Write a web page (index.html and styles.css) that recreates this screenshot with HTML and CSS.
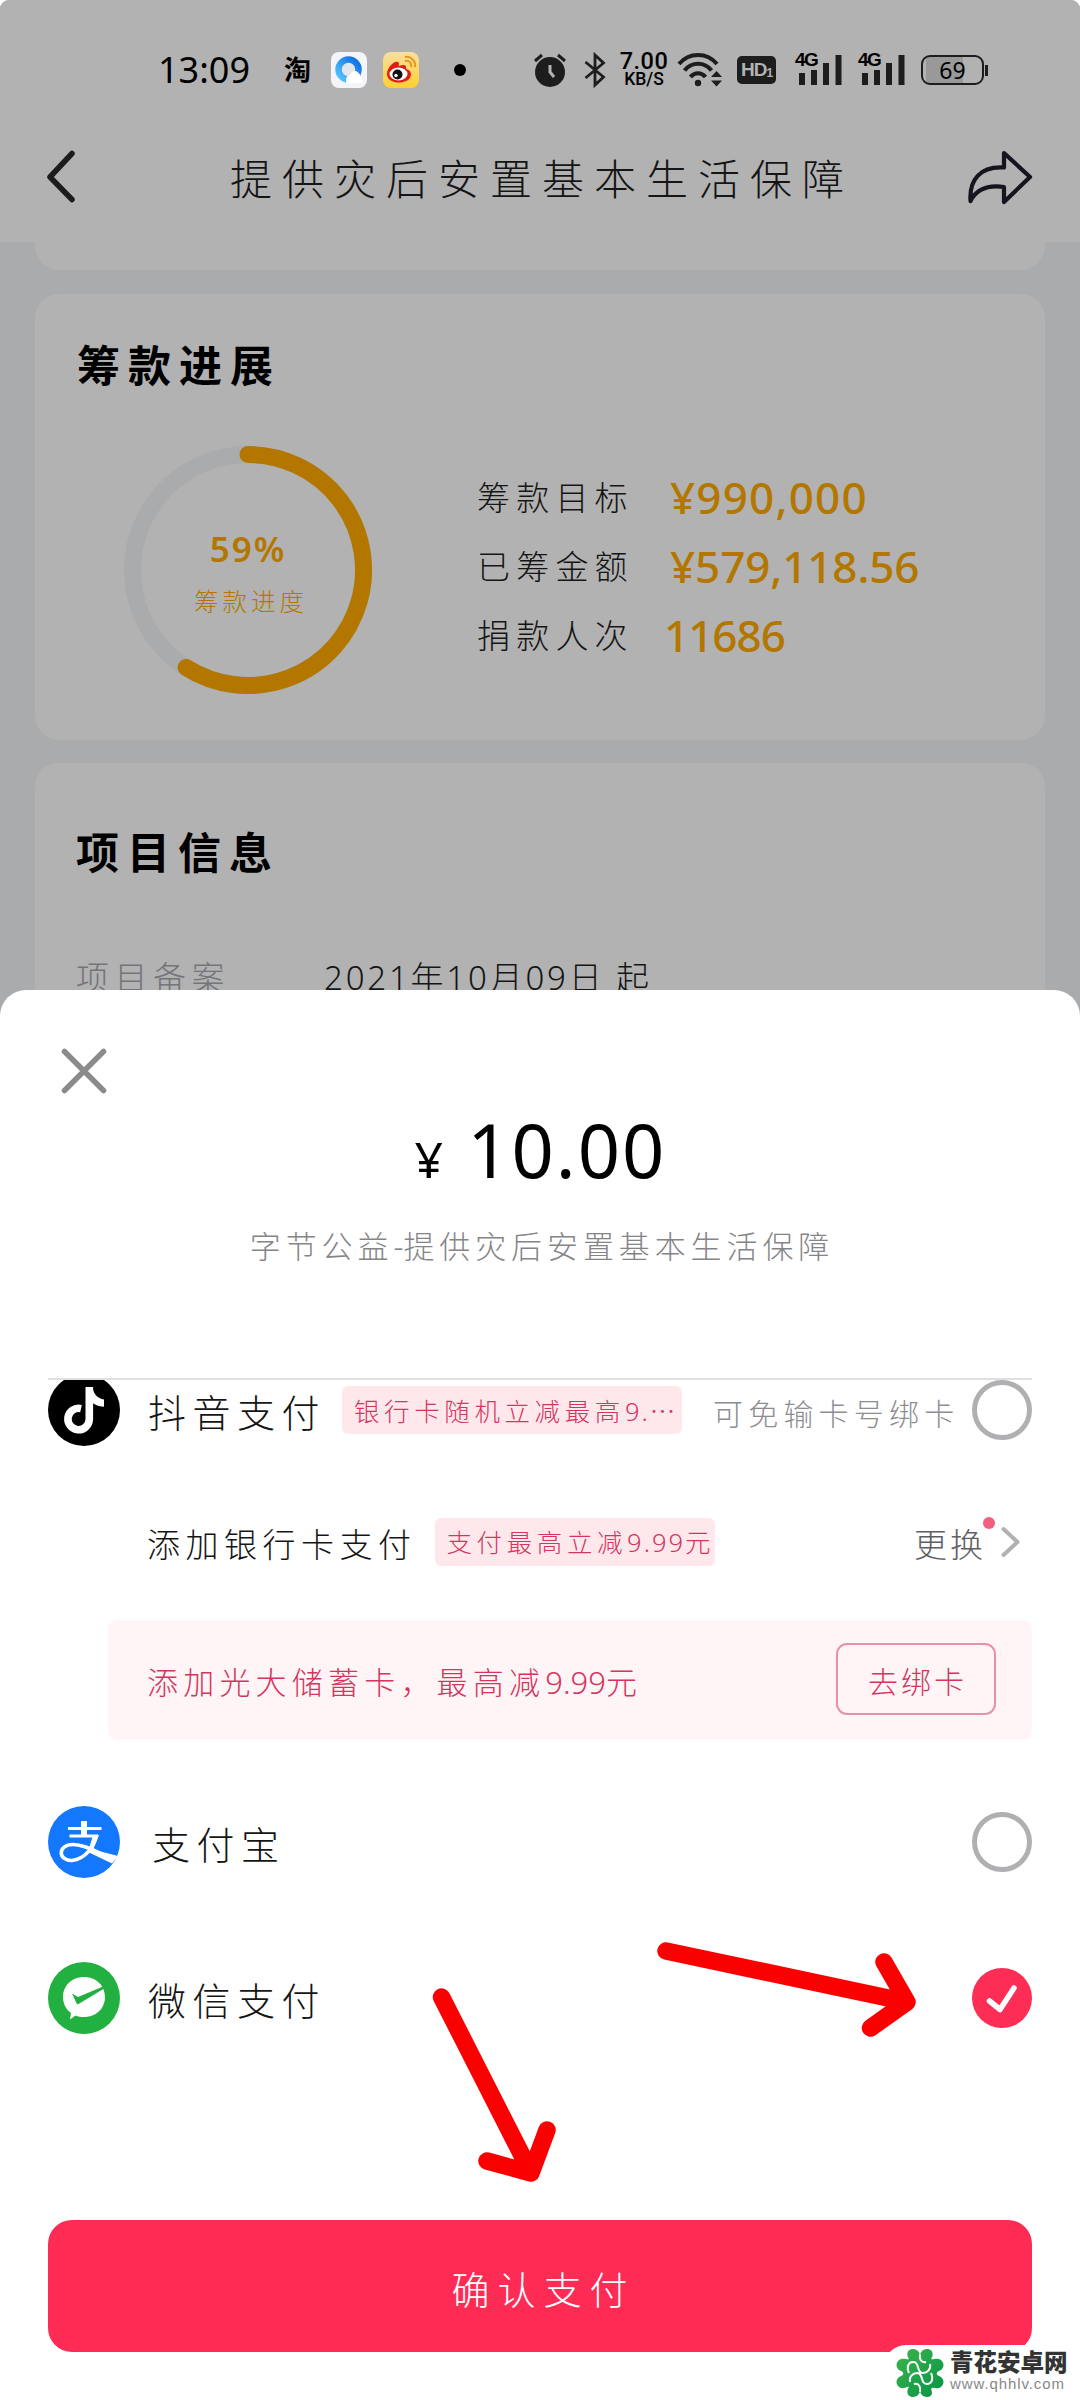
FILE: index.html
```html
<!DOCTYPE html>
<html lang="zh-CN">
<head>
<meta charset="utf-8">
<title>提供灾后安置基本生活保障</title>
<link rel="stylesheet" href="styles.css">
</head>
<body>
<div class="screen">
  <header class="top">
    <div class="status">
      <span class="clock">13:09</span>
      <span class="tao">淘</span>
      <svg class="app-a" width="36" height="36" viewBox="0 0 36 36">
        <defs><linearGradient id="qb" x1="0" y1="1" x2="1" y2="0"><stop offset="0" stop-color="#58c8ff"/><stop offset="1" stop-color="#0a6be0"/></linearGradient></defs>
        <rect width="36" height="36" rx="8" fill="#f3f5f8"/>
        <circle cx="17.500" cy="17.500" r="10" fill="#e3e6ea" stroke="url(#qb)" stroke-width="6.500"/>
        <path d="M16 31a5 5 0 0 1 3-8 6 6 0 0 1 6-4c4 2 6 7 6 12z" fill="#fff"/>
      </svg>
      <svg class="app-b" width="36" height="36" viewBox="0 0 36 36">
        <defs><linearGradient id="wb" x1="0" y1="0" x2="0" y2="1"><stop offset="0" stop-color="#f8dfa0"/><stop offset="1" stop-color="#ffd02e"/></linearGradient></defs>
        <rect width="36" height="36" rx="8" fill="url(#wb)"/>
        <path d="M4 22C4 15 12 8 15 10c2 1 0 4 1 4 5-2 8-1 7 3 5 1 6 5 4 9-5 7-23 6-23-4z" fill="#e11b16"/>
        <ellipse cx="15.500" cy="22" rx="9" ry="6.500" fill="#fff"/><circle cx="14.500" cy="22.500" r="5" fill="#111"/><circle cx="13" cy="23.500" r="1.700" fill="#fff"/>
        <path d="M22 9c4-1 7 2 6 6M22 5c6-1 11 4 10 10" fill="none" stroke="#e8961c" stroke-width="2"/>
      </svg>
      <span class="dot"></span>
      <svg class="alarm" width="34" height="36" viewBox="0 0 34 36"><circle cx="17" cy="20" r="15" fill="#1d1d1d"/><path d="M2 9l7-6M32 9l-7-6" stroke="#1d1d1d" stroke-width="3"/><path d="M17 13v7l4 5" fill="none" stroke="#b2b2b2" stroke-width="3"/></svg>
      <svg class="bt" width="22" height="36" viewBox="0 0 22 36"><path d="M1.500 10l18 15-8.500 8V3l8.500 8-18 15" fill="none" stroke="#1d1d1d" stroke-width="2.800"/></svg>
      <span class="speed"><b>7.00</b><i>KB/S</i></span>
      <svg class="wifi" width="46" height="36" viewBox="0 0 46 36"><path d="M2 12c10-12 28-12 38 0M7.500 18.500c7-9 20-9 27 0M13.500 25c4-5 11-5 15 0" fill="none" stroke="#1d1d1d" stroke-width="4.200"/><circle cx="21" cy="31" r="3.200" fill="#1d1d1d"/><path d="M34 25l5.500-6 5.500 6zM34 28.500h11l-5.500 6z" fill="#1d1d1d"/></svg>
      <span class="hd">HD<small>1</small></span>
      <span class="cell"><em>4G</em><svg width="43" height="32" viewBox="0 0 43 32"><path d="M3 19v12M15 16v15M27 9v22M39.500 1v30" stroke="#1d1d1d" stroke-width="6"/></svg></span>
      <span class="cell cell-2"><em>4G</em><svg width="43" height="32" viewBox="0 0 43 32"><path d="M3 19v12M15 16v15M27 9v22M39.500 1v30" stroke="#1d1d1d" stroke-width="6"/></svg></span>
      <span class="battery">69</span><span class="nub"></span>
    </div>
    <div class="nav">
      <svg width="30" height="54" viewBox="0 0 30 54"><path d="M26 3.500L4 27l22 22.500" fill="none" stroke="#1c1c1c" stroke-width="5.500" stroke-linecap="round" stroke-linejoin="round"/></svg>
      <h1>提供灾后安置基本生活保障</h1>
      <svg width="66" height="56" viewBox="0 0 66 56"><path d="M37 4l26 24-26 25V38C22 36 10 39 3.500 52 2 31 13 17 37 18.500z" fill="none" stroke="#151520" stroke-width="4.200" stroke-linejoin="round"/></svg>
    </div>
  </header>
  <main class="page">
    <div class="card card-prev"></div>
    <section class="card progress">
      <h2>筹款进展</h2>
      <div class="progress-body">
        <div class="ring">
          <svg width="248" height="248" viewBox="0 0 248 248"><circle cx="124" cy="124" r="115.500" fill="none" stroke="#a9abad" stroke-width="17"/><path d="M124 8.500A115.500 115.500 0 1 1 62.100 221.500" fill="none" stroke="#b37700" stroke-width="17" stroke-linecap="round"/></svg>
          <div class="ring-text"><strong>59%</strong><span>筹款进度</span></div>
        </div>
        <dl class="facts">
          <dt>筹款目标</dt><dd>¥990,000</dd>
          <dt>已筹金额</dt><dd class="mid">¥579,118.56</dd>
          <dt>捐款人次</dt><dd class="count">11686</dd>
        </dl>
      </div>
    </section>
    <section class="card info">
      <h2>项目信息</h2>
      <div class="info-row"><span class="key">项目备案</span><span>2021年10月09日 起</span></div>
    </section>
  </main>

  <section class="sheet">
    <svg class="close" width="46" height="46" viewBox="0 0 46 46"><path d="M3.500 3.500l39 39M42.500 3.500l-39 39" stroke="#8b8b8e" stroke-width="5.500" stroke-linecap="round"/></svg>
    <div class="amount"><small>¥</small>10.00</div>
    <p class="desc">字节公益<span>-</span>提供灾后安置基本生活保障</p>
    <div class="methods">
      <div class="method first">
        <svg class="logo" width="72" height="72" viewBox="0 0 72 72"><circle cx="36" cy="36" r="36" fill="#000"/><path d="M41.300 13v32a10.700 10.700 0 1 1-8.300-10.400" fill="none" stroke="#fff" stroke-width="7.600"/><path d="M44.500 13c1 7 5 11.500 11.500 12.500v7.200c-6-.2-10-2.500-14-5.700V13z" fill="#fff"/></svg>
        <span class="name">抖音支付</span>
        <span class="tag tag-wide">银行卡随机立减最高<span class="num">9.</span><span class="more">…</span></span>
        <span class="note">可免输卡号绑卡</span>
        <span class="radio"></span>
      </div>
      <div class="card-row">
        <span class="card-name">添加银行卡支付</span>
        <span class="tag">支付最高立减<span class="num">9.99</span>元</span>
        <span class="change">更换<i class="badge"></i></span>
        <svg width="20" height="32" viewBox="0 0 20 32"><path d="M2.500 3L16.500 16 2.500 29" fill="none" stroke="#b1b1b4" stroke-width="4" stroke-linecap="round" stroke-linejoin="round"/></svg>
      </div>
      <div class="promo"><span>添加光大储蓄卡，最高减<span class="num">9.99</span>元</span><button class="bind">去绑卡</button></div>
      <div class="method alipay">
        <svg class="logo" width="72" height="72" viewBox="0 0 72 72"><circle cx="36" cy="36" r="36" fill="#1478ff"/><path d="M20 22.500h33.500M21.500 30H50" stroke="#fff" stroke-width="3"/><path d="M36 15v15" stroke="#fff" stroke-width="6"/><path d="M48.500 29.500C46 40 38 53 24 54.500 10 55 9 38.500 25 38.500c12 0 24 8 40 14.500" fill="none" stroke="#fff" stroke-width="3.600"/><path d="M45 29h6l-6 14.500L70 50l-6 7.500L40 46z" fill="#fff"/></svg>
        <span class="name">支付宝</span>
        <span class="radio"></span>
      </div>
      <div class="method wechat">
        <svg class="logo" width="72" height="72" viewBox="0 0 72 72"><circle cx="36" cy="36" r="36" fill="#22b140"/><path d="M36 15c12 0 21 8.500 21 20s-9 20-21 20c-3 0-6-.5-8.500-1.500L22 57.500l1-6.500c-5-3.500-8-9.500-8-16 0-11.500 9-20 21-20z" fill="#fff"/><path d="M24 31.500l6 3.500 25-10.500v2.800L30.500 42c-.8.500-1.500.3-2-.8z" fill="#22b140"/></svg>
        <span class="name">微信支付</span>
        <svg class="check" width="60" height="60" viewBox="0 0 60 60"><circle cx="30" cy="30" r="30" fill="#fd2d56"/><path d="M17.500 33l10.500 8.500L42 20" fill="none" stroke="#fff" stroke-width="5.500" stroke-linecap="round" stroke-linejoin="round"/></svg>
      </div>
    </div>
    <button class="confirm">确认支付</button>
  </section>

  <svg class="arrows" width="1080" height="300" viewBox="0 1920 1080 300"><path d="M441.500 1997L531 2173M487 2161l44 12 16-43M666 1951l241 51M884 1962l23 40-36.500 26" fill="none" stroke="#fb0000" stroke-width="17.500" stroke-linecap="round" stroke-linejoin="round"/></svg>

  <div class="brand">
    <svg width="48" height="48" viewBox="0 0 48 48">
      <defs><linearGradient id="leaf" x1="0" y1="0" x2="1" y2="1"><stop offset="0" stop-color="#3cb54a"/><stop offset="1" stop-color="#079347"/></linearGradient></defs>
      <path d="M17 0c5 0 6 4 7 5 1-1 2-5 7-5 6 0 7 6 4 10 2 1 4-1 8 0 6 2 6 10 0 12-3 1-3 4 0 5 6 2 6 10 0 12-4 1-6-2-8 1 2 4 1 8-4 8-5 0-6-4-7-5-1 1-2 5-7 5-6 0-7-6-4-10-2-1-4 2-8 1-6-2-6-10 0-12 3-1 3-4 0-5-6-2-6-10 0-12 4-1 6 1 8 0-3-4-2-10 4-10z" fill="url(#leaf)"/>
      <path d="M13 24c-3-7 0-11 4-11 7 0 3 9 9 11 6 0 9-4 8-9M35 24c3 7 0 11-4 11-7 0-3-9-9-11-6 0-9 4-8 9M24 5c-1 5 1 9 6 8M24 43c1-5-1-9-6-8" fill="none" stroke="#fff" stroke-width="2"/>
    </svg>
    <div class="brand-text"><strong>青花安卓网</strong><span>www.qhhlv.com</span></div>
  </div>
</div>
</body>
</html>
```
FILE: styles.css
```css
* { box-sizing: border-box; margin: 0; padding: 0; }
body { background: #fff; }
h1, h2, strong, b, i, em { font-weight: inherit; font-style: normal; }
svg { display: block; flex: none; }
button { font: inherit; letter-spacing: inherit; background: none; border: 0; }

.screen {
  position: relative;
  width: 1080px;
  height: 2400px;
  overflow: hidden;
  border-radius: 9px 9px 0 0;
  background: #a9abad;
  color: #151515;
  font-family: "Noto Sans", "Noto Sans CJK SC", sans-serif;
  font-weight: 300;
  white-space: nowrap;
}

/* Status bar and title */
.top { height: 242px; background: #b2b2b2; }
.status { display: flex; align-items: center; height: 102px; padding: 38px 0 0 158px; color: #000; }
.clock { width: 126px; font-size: 36px; line-height: 64px; font-weight: 400; }
.tao { width: 47px; font-size: 27px; line-height: 40px; font-weight: 700; }
.app-b { margin-left: 16px; }
.dot { width: 12px; height: 12px; margin: 0 67px 0 35px; border-radius: 50%; background: #000; }
.bt { margin-left: 17px; }
.speed { display: flex; flex-direction: column; align-items: center; width: 50px; margin-left: 13px; }
.speed b { font: 500 23.500px/19px Roboto, sans-serif; letter-spacing: .5px; }
.speed i { font: 500 17.500px/17px Roboto, sans-serif; }
.wifi { margin-left: 8px; }
.hd { display: flex; align-items: center; justify-content: center; width: 39px; height: 28px; margin-left: 14px; border-radius: 5px; background: #1d1d1d; color: #b2b2b2; font: 700 19px/28px "Liberation Sans"; letter-spacing: -1px; }
.hd small { padding-top: 6px; font-size: 12px; }
.cell { position: relative; width: 46px; margin-left: 20px; padding-left: 3px; }
.cell-2 { margin-left: 17px; }
.cell em { position: absolute; left: -1px; top: -4px; z-index: 1; padding-right: 1px; background: #b2b2b2; font: 700 19px/19px "Liberation Sans"; letter-spacing: -1.500px; }
.battery { width: 63px; height: 30px; margin-left: 16px; border: 2px solid #1d1d1d; border-radius: 9px; background: linear-gradient(90deg, #b2b2b2 3px, #999 3px, #999 40px, #b2b2b2 40px); font: 400 23px/26px "Noto Sans"; text-align: center; }
.nub { width: 3px; height: 11px; margin-left: 1px; background: #1d1d1d; }
.nav { display: flex; align-items: center; justify-content: space-between; height: 150px; padding: 0 47px 0 46px; }
.nav h1 { padding: 4px 0 0 41px; font-size: 42px; line-height: 60px; letter-spacing: 10px; }

/* Cards */
.page { display: flex; flex-direction: column; align-items: center; }
.card { width: 1010px; border-radius: 24px; background: #b2b2b2; }
.card h2 { color: #000; font-size: 43px; line-height: 60px; font-weight: 600; letter-spacing: 8px; }
.card-prev { height: 28px; border-radius: 0 0 24px 24px; }
.progress { height: 446px; margin-top: 24px; padding: 42px 0 0 42px; }
.progress-body { display: flex; align-items: flex-start; padding: 50px 0 0 47px; }
.ring { position: relative; width: 248px; height: 248px; }
.ring-text { position: absolute; inset: 0; display: flex; flex-direction: column; align-items: center; color: #b37700; }
.ring-text strong { margin-top: 78px; font-size: 35px; line-height: 50px; font-weight: 600; letter-spacing: 2px; }
.ring-text span { margin-top: 10px; padding-left: 6px; font-size: 24.500px; line-height: 36px; letter-spacing: 4px; }
.facts { display: grid; grid-template-columns: 193px auto; grid-auto-rows: 69px; margin: 17px 0 0 105px; line-height: 69px; }
.facts dt { font-size: 33px; letter-spacing: 6.200px; }
.facts dd { color: #b37700; font-weight: 500; font-size: 44px; letter-spacing: 1.200px; }
.facts .mid { letter-spacing: -.1px; }
.facts .count { margin-left: -6px; letter-spacing: -1px; }
.info { height: 260px; margin-top: 23px; padding: 60px 0 0 41px; }
.info-row { display: flex; margin-top: 70px; font-size: 33px; line-height: 50px; letter-spacing: 2.800px; }
.info-row .key { width: 248px; color: #74757a; letter-spacing: 5.500px; }

/* Payment sheet */
.sheet { position: absolute; left: 0; right: 0; top: 990px; bottom: 0; display: flex; flex-direction: column; padding: 58px 48px 48px; border-radius: 26px 26px 0 0; background: #fff; }
.close { margin-left: 13px; }
.amount { display: flex; align-items: baseline; justify-content: center; height: 92px; margin-top: 10px; padding-left: 1px; color: #000; font-size: 74px; line-height: 92px; letter-spacing: 2px; font-weight: 400; }
.amount small { margin-right: 22px; font-size: 50px; }
.desc { margin-top: 30px; text-align: center; padding-left: 4px; color: #858588; font-size: 31px; line-height: 40px; letter-spacing: 4.900px; }
.desc span { letter-spacing: 0; }
.methods { flex: none; height: 822px; margin-top: 112px; border-top: 2px solid #e0e0e2; overflow: hidden; }
.method { display: flex; align-items: center; height: 72px; }
.method .name { padding: 4px 0 0 28px; font-size: 38px; line-height: 50px; letter-spacing: 6.500px; }
.method .radio, .method .check { margin-left: auto; }
.first { margin-top: -6px; }
.radio { width: 60px; height: 60px; border: 5px solid #b0b0b3; border-radius: 50%; }
.tag { height: 48px; margin-left: 16px; padding: 0 8px 0 12px; border-radius: 6px; background: #ffe8eb; color: #d43560; font-size: 25.500px; line-height: 48px; letter-spacing: 4.600px; }
.tag-wide { width: 340px; }
.tag .num { letter-spacing: 2px; }
.more { font-family: "Noto Sans CJK SC", sans-serif; letter-spacing: 0; }
.method .note { margin-left: 31px; padding-top: 3px; color: #8e8e92; font-size: 30px; letter-spacing: 5.200px; }
.card-row { display: flex; align-items: center; height: 48px; margin-top: 72px; padding: 0 11px 0 99px; }
.card-name { padding-top: 1px; font-size: 33px; letter-spacing: 5.500px; }
.card-row .tag { width: 280px; margin-left: 18px; }
.change { position: relative; margin: 0 15px 0 auto; padding-top: 1px; color: #5f5f63; font-size: 33px; letter-spacing: 3px; }
.badge { position: absolute; right: -9px; top: -1px; width: 12px; height: 12px; border-radius: 50%; background: #f2607f; }
.promo { display: flex; align-items: center; justify-content: space-between; height: 120px; margin: 54px 0 0 60px; padding: 0 36px 0 39px; border-radius: 9px; background: #fff5f6; color: #d43560; font-size: 31px; letter-spacing: 5.200px; }
.promo .num { letter-spacing: 0; }
.bind { width: 160px; height: 72px; margin-top: -2px; padding: 1px 0 0 3px; border: 2px solid #e892aa; border-radius: 11px; color: #d43560; font-size: 30px; letter-spacing: 3px; }
.alipay { margin-top: 66px; }
.alipay .name { padding-left: 32px; }
.wechat { margin-top: 84px; }
.confirm { flex: none; height: 132px; margin-top: 20px; padding: 3px 0 0 7px; border-radius: 24px; background: #fe2c55; color: #fff; font-size: 38px; letter-spacing: 8px; }

.arrows { position: absolute; left: 0; top: 1920px; }

.brand { position: absolute; right: 0; bottom: 0; display: flex; gap: 6px; width: 196px; height: 55px; padding: 4px 0 0 12px; border-top-left-radius: 22px; background: #fff; }
.brand-text { display: flex; flex-direction: column; }
.brand-text strong { color: #333; font-size: 23.500px; line-height: 26px; font-weight: 800; }
.brand-text span { color: #888; font: 400 15px/18px "Liberation Sans"; letter-spacing: .9px; }
```
